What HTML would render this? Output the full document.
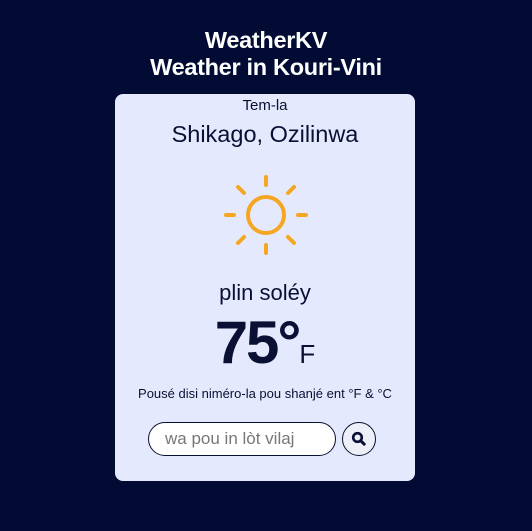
<!DOCTYPE html>
<html><head><style>
body{margin:0;width:532px;height:531px;background:#020b33;font-family:"Liberation Sans",sans-serif;position:relative;overflow:hidden}
.t{position:absolute;left:0;width:532px;text-align:center}
.h{color:#fff;font-weight:bold;font-size:23.5px;letter-spacing:-0.3px}
.card{position:absolute;left:115px;top:94px;width:300px;height:387px;background:#e5e9fd;border-radius:8px}
.c{position:absolute;left:0;width:300px;text-align:center;color:#0a1033}
</style></head><body>
<div class="t h" style="top:27px">WeatherKV</div>
<div class="t h" style="top:54px">Weather in Kouri-Vini</div>
<div class="card">
<div class="c" style="top:3px;font-size:15px">Tem-la</div>
<div class="c" style="top:27px;font-size:23.5px">Shikago, Ozilinwa</div>
<svg style="position:absolute;left:101px;top:79px" width="100" height="84" viewBox="-50 -42 100 84">
<g stroke="#f5a623" stroke-width="4" stroke-linecap="round" fill="none">
<circle cx="0" cy="0" r="18"/>
<line x1="0" y1="-38" x2="0" y2="-30"/><line x1="0" y1="30" x2="0" y2="38"/>
<line x1="-40" y1="0" x2="-32" y2="0"/><line x1="32" y1="0" x2="40" y2="0"/>
<line x1="-28" y1="-28" x2="-22" y2="-22"/><line x1="22" y1="22" x2="28" y2="28"/>
<line x1="28" y1="-28" x2="22" y2="-22"/><line x1="-22" y1="22" x2="-28" y2="28"/>
</g></svg>
<div class="c" style="top:186px;font-size:22px">plin soléy</div>
<div class="c" style="top:214px;font-size:60px;font-weight:bold;letter-spacing:-2px">75°<span style="font-size:26px;font-weight:normal;letter-spacing:0">F</span></div>
<div class="c" style="top:292px;font-size:13px">Pousé disi niméro-la pou shanjé ent °F &amp; °C</div>
<div style="position:absolute;left:33px;top:328px;width:186px;height:32px;border:1px solid #0a1033;border-radius:17px;background:#fff;font-size:17px;color:#777;line-height:32px"><span style="margin-left:16px">wa pou in lòt vilaj</span></div>
<div style="position:absolute;left:227px;top:328px;width:32px;height:32px;border:1px solid #0a1033;border-radius:50%;background:#eef0f8">
<svg width="32" height="32" viewBox="0 0 32 32"><circle cx="14.5" cy="14.5" r="4.3" stroke="#0a1033" stroke-width="2.6" fill="none"/><line x1="17.8" y1="17.8" x2="21.2" y2="21.2" stroke="#0a1033" stroke-width="3" stroke-linecap="round"/></svg>
</div>
</div>
</body></html>
